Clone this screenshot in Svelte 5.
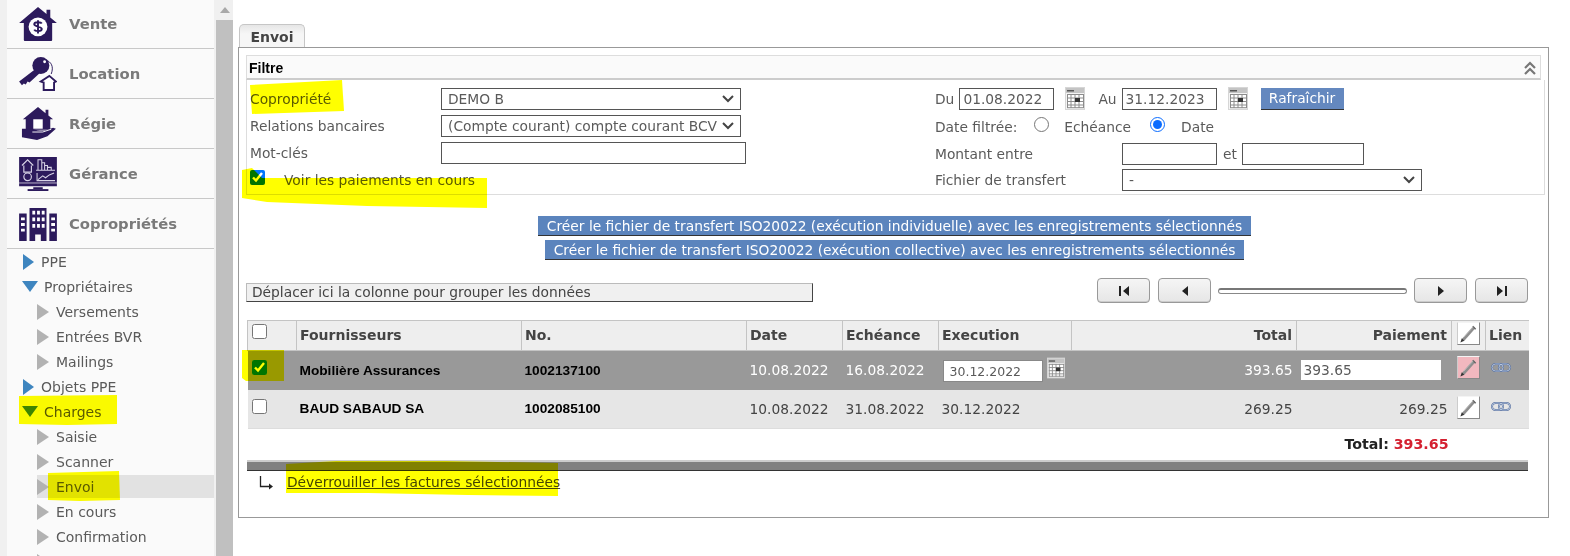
<script>
  const big = [
    { id: 'vente', label: 'Vente' },
    { id: 'location', label: 'Location' },
    { id: 'regie', label: 'Régie' },
    { id: 'gerance', label: 'Gérance' },
    { id: 'copro', label: 'Copropriétés' }
  ];
  const tree = [
    { t: 'PPE', k: 'r' },
    { t: 'Propriétaires', k: 'd' },
    { t: 'Versements', k: 's' },
    { t: 'Entrées BVR', k: 's' },
    { t: 'Mailings', k: 's' },
    { t: 'Objets PPE', k: 'r' },
    { t: 'Charges', k: 'd' },
    { t: 'Saisie', k: 's' },
    { t: 'Scanner', k: 's' },
    { t: 'Envoi', k: 's', on: true },
    { t: 'En cours', k: 's' },
    { t: 'Confirmation', k: 's' },
    { t: '', k: 's' }
  ];
</script>

{#snippet cal(cls = '')}
  <svg class="cal {cls}" viewBox="0 0 20 23" aria-hidden="true">
    <rect x="0.500" y="0.500" width="19" height="22" fill="#f4f4f4" stroke="#d6d6d6" />
    <rect x="1" y="1" width="18" height="5" fill="#c4c4c4" />
    <rect x="2" y="3" width="7" height="1.500" fill="#555" />
    <rect x="2" y="7" width="17" height="14" fill="#fff" />
    <path d="M2 7.500h17M2 11h17M2 14.500h17M2 18h17M2 20.700h17M2.500 7v14M6 7v14M10 7v14M14 7v14M18.500 7v14" stroke="#8c8c8c" stroke-width="1" />
    <rect x="10" y="11" width="5" height="4" fill="#333" />
  </svg>
{/snippet}

{#snippet pen(cls = '')}
  <span class="pen {cls}">
    <svg viewBox="0 0 22 22" aria-hidden="true">
      <path d="M5 18L17 4.500" stroke="#8e8e8e" stroke-width="3.200" />
      <path d="M15.500 3.500L18.500 6.500" stroke="#666" stroke-width="1.500" />
      <path d="M6 15L16 4" stroke="#c4c4c4" stroke-width="0.800" />
      <path d="M2.500 20.500l1.500-4.500 2.500 2.500z" fill="#333" />
    </svg>
  </span>
{/snippet}

{#snippet link()}
  <svg class="link" viewBox="0 0 20 9" aria-hidden="true">
    <rect x="1" y="1" width="11" height="7" rx="3.500" fill="none" stroke="#5a72a0" stroke-width="2" />
    <rect x="8" y="1" width="11" height="7" rx="3.500" fill="none" stroke="#5a72a0" stroke-width="2" />
    <rect x="1" y="1" width="11" height="7" rx="3.500" fill="none" stroke="#c3d0e6" stroke-width="0.800" />
    <rect x="8" y="1" width="11" height="7" rx="3.500" fill="none" stroke="#c3d0e6" stroke-width="0.800" />
  </svg>
{/snippet}

<div class="page">
  <aside class="side">
    <nav class="menu">
      {#each big as b}
        <div class="bigrow">
          <svg class="bigicon" viewBox="0 0 40 36" aria-hidden="true">
            {#if b.id === 'vente'}
              <path fill="#2c1a5c" d="M20 0L0 17h5v18q0 1 1 1h28q1 0 1-1V17h5L33 11V3h-4v4.500z" />
              <circle cx="20" cy="21" r="10" fill="#fff" />
              <path d="M24 17.500c-1-2-8-2-8 .8s8 2 8 5-7 2.800-8 .7M20 14v14" fill="none" stroke="#2c1a5c" stroke-width="2" />
            {:else if b.id === 'location'}
              <circle cx="23" cy="9" r="9" fill="#2c1a5c" />
              <circle cx="27" cy="5" r="1.500" fill="#fff" />
              <path d="M17 13L0 26l3 4 2-2 2 1 2-3 2 1 11-10z" fill="#2c1a5c" />
              <path d="M28 3c6 2 9 7 6 15" fill="none" stroke="#2c1a5c" stroke-width="1" />
              <path d="M32 20l7 6-2 1v8H26v-8l-3-1z" fill="#fff" stroke="#2c1a5c" stroke-width="2" />
            {:else if b.id === 'regie'}
              <path fill="#2c1a5c" d="M20 0L4 13h3v11h26V13h3L31 9V3h-3v3.500z" />
              <rect x="15" y="13" width="10" height="10" fill="#fff" />
              <path fill="#2c1a5c" d="M3 23h9c4 0 6 2 10 2h5l9-3 3 1-9 8-11 4-16-3z" />
              <path d="M14 26.500h11l9-3" fill="none" stroke="#fff" stroke-width="1" />
            {:else if b.id === 'gerance'}
              <path fill="#2c1a5c" d="M0 0h40v31H0z" />
              <rect x="15" y="32" width="10" height="2" fill="#2c1a5c" />
              <rect x="9" y="34" width="22" height="2" fill="#2c1a5c" />
              <rect x="0" y="27" width="40" height="1" fill="#fff" opacity=".7" />
              <path d="M3 9l6-6 6 6M5 9v7h8V9" fill="none" stroke="#d8d4e6" stroke-width="1.200" />
              <circle cx="9" cy="21" r="4" fill="none" stroke="#d8d4e6" stroke-width="1.200" />
              <path d="M20 14V3h4v11M24 14V6h3v8M27 14v-5h3v5M30 14v-3h4v3M18 14h20" fill="none" stroke="#d8d4e6" stroke-width="1.100" />
              <path d="M20 24l5-4 3 2 4-3 5-2M19 17v8h19" fill="none" stroke="#d8d4e6" stroke-width="1.100" />
            {:else}
              <path fill="#2c1a5c" d="M0 7h8v29H0zM11 1h18v35h-6v-7h-6v7h-6zM32 7h8v29h-8z" />
              <path fill="#fff" d="M14 4h3v4h-3zM19 4h3v4h-3zM24 4h3v4h-3zM14 11h3v4h-3zM19 11h3v4h-3zM24 11h3v4h-3zM14 18h3v4h-3zM19 18h3v4h-3zM24 18h3v4h-3zM2 11h4v3H2zM2 17h4v3H2zM2 23h4v3H2zM34 11h4v3h-4zM34 17h4v3h-4zM34 23h4v3h-4z" />
            {/if}
          </svg>
          <span class="biglabel">{b.label}</span>
        </div>
      {/each}
      <ul class="tree">
        {#each tree as n}
          <li class="node {n.k}" class:on={n.on}>
            <span class="tri"></span><span>{n.t}</span>
          </li>
        {/each}
      </ul>
    </nav>
    <div class="scroll"><span class="up"></span><span class="thumb"></span></div>
  </aside>

  <main class="main">
    <div class="tab">Envoi</div>
    <section class="panel">
      <header class="fhead"><b>Filtre</b>
        <svg class="collapse" viewBox="0 0 14 14" aria-hidden="true">
          <path d="M2 7l5-5 5 5M2 13l5-5 5 5" fill="none" stroke="#777" stroke-width="2.200" />
        </svg>
      </header>
      <div class="fbody">
        <div class="fleft">
          <span class="lab">Copropriété</span>
          <select class="s1"><option>DEMO B</option></select>
          <span class="lab">Relations bancaires</span>
          <select class="s1"><option>(Compte courant) compte courant BCV</option></select>
          <span class="lab">Mot-clés</span>
          <input class="i1" />
          <label class="seeing">
            <input type="checkbox" class="cb" checked />
            <span>Voir les paiements en cours</span>
          </label>
        </div>
        <div class="fright">
          <div class="frow first">
            <span>Du</span><input class="date" value="01.08.2022" />{@render cal('hcal')}
            <span class="au">Au</span><input class="date" value="31.12.2023" />{@render cal('hcal')}
            <button class="refresh">Rafraîchir</button>
          </div>
          <div class="frow radios">
            <span>Date filtrée:</span><input type="radio" name="d" class="rd" /><span>Echéance</span>
            <input type="radio" name="d" class="rd two" checked /><span>Date</span>
          </div>
          <div class="frow">
            <span class="fl">Montant entre</span><input class="date" /><span class="et">et</span><input class="date wide" />
          </div>
          <div class="frow">
            <span class="fl">Fichier de transfert</span><select class="s2"><option>-</option></select>
          </div>
        </div>
      </div>

      <div class="actions">
        <button class="act">Créer le fichier de transfert ISO20022 (exécution individuelle) avec les enregistrements sélectionnés</button>
        <button class="act">Créer le fichier de transfert ISO20022 (exécution collective) avec les enregistrements sélectionnés</button>
      </div>

      <div class="toolbar">
        <div class="group">Déplacer ici la colonne pour grouper les données</div>
        <div class="pager">
          <button class="pg" aria-label="first"><svg viewBox="0 0 12 12"><path d="M1 1h2v10H1zM11 1v10L5 6z" fill="#222" /></svg></button>
          <button class="pg" aria-label="prev"><svg viewBox="0 0 12 12"><path d="M9 1v10L3 6z" fill="#222" /></svg></button>
          <span class="track"></span>
          <button class="pg" aria-label="next"><svg viewBox="0 0 12 12"><path d="M3 1v10l6-5z" fill="#222" /></svg></button>
          <button class="pg" aria-label="last"><svg viewBox="0 0 12 12"><path d="M1 1v10l6-5zM9 1h2v10H9z" fill="#222" /></svg></button>
        </div>
      </div>

      <table class="grid">
        <colgroup>
          <col class="c1" /><col class="c2" /><col class="c3" /><col class="c4" /><col class="c5" /><col class="c6" /><col class="c7" /><col class="c8" /><col class="c9" /><col class="c10" />
        </colgroup>
        <thead>
          <tr>
            <th class="chk"><input type="checkbox" class="cb" /></th>
            <th>Fournisseurs</th><th>No.</th><th>Date</th><th>Echéance</th><th>Execution</th>
            <th class="r">Total</th><th class="r">Paiement</th>
            <th class="ic">{@render pen()}</th><th>Lien</th>
          </tr>
        </thead>
        <tbody>
          <tr class="sel">
            <td class="chk"><input type="checkbox" class="cb" checked /></td>
            <td class="b">Mobilière Assurances</td><td class="b">1002137100</td>
            <td>10.08.2022</td><td>16.08.2022</td>
            <td class="exec"><input class="ex" value="30.12.2022" />{@render cal('rcal')}</td>
            <td class="r">393.65</td>
            <td class="pay"><input class="py" value="393.65" /></td>
            <td class="ic">{@render pen('pink')}</td><td class="lk">{@render link()}</td>
          </tr>
          <tr class="odd">
            <td class="chk"><input type="checkbox" class="cb" /></td>
            <td class="b">BAUD SABAUD SA</td><td class="b">1002085100</td>
            <td>10.08.2022</td><td>31.08.2022</td><td>30.12.2022</td>
            <td class="r">269.25</td><td class="r">269.25</td>
            <td class="ic">{@render pen()}</td><td class="lk">{@render link()}</td>
          </tr>
          <tr class="sum">
            <td colspan="8" class="r"><b>Total: <em>393.65</em></b></td><td colspan="2"></td>
          </tr>
        </tbody>
      </table>
      <div class="bar"></div>
      <div class="unlock">
        <svg class="corner" viewBox="0 0 16 16" aria-hidden="true"><path d="M1.500 1v10.500H10" fill="none" stroke="#222" stroke-width="1.300" /><path d="M10 8.500l4 3-4 3z" fill="#222" /></svg>
        <a href="#u">Déverrouiller les factures sélectionnées</a>
      </div>
    </section>
  </main>

  <svg class="marks" viewBox="0 0 1570 556" aria-hidden="true">
    <path d="M250 85l92-5 2 31-92 3z" />
    <path d="M242 170l10-2 10 10 225 0v30l-120-2-100-4-25-4z" />
    <path d="M19 396l98-1v29l-50 1-48-1z" />
    <path d="M48 473l71-2 1 29-40 1-32-1z" />
    <path d="M242 350l42 0v31h-38l-4-3z" />
    <path d="M286 464l50-3 110 0 112 2v33l-90-1-100-2-82 0z" />
  </svg>
</div>

<style>
  :global(body) { margin: 0; background: #fff; }
  .page {
    position: relative; display: flex; width: 1570px; height: 556px; overflow: hidden;
    font-family: "DejaVu Sans", Verdana, sans-serif; font-size: 13.8px; color: #5a5a5a;
  }
  .side { display: flex; flex: 0 0 233px; height: 556px; background: #f0f0f0; padding-left: 7px; box-sizing: border-box; }
  .menu { width: 207px; background: #fafafa; overflow: hidden; }
  .bigrow { display: flex; align-items: center; height: 49px; border-bottom: 1px solid #c8c8c8; padding-left: 12px; }
  .bigrow:first-child { height: 47px; padding-bottom: 1px; }
  .bigicon { width: 38px; height: 34px; flex: none; }
  .biglabel { margin-left: 12px; font-weight: 700; font-size: 14.800px; color: #7a7a7a; }
  .tree { list-style: none; margin: 0; padding: 0; }
  .node { display: flex; align-items: center; height: 25px; white-space: nowrap; color: #5a5a5a; font-size: 14px; }
  .tri { flex: none; width: 0; height: 0; }
  .node.r { padding-left: 16px; }
  .node.r .tri { border-left: 11px solid #3e85bf; border-top: 8px solid transparent; border-bottom: 8px solid transparent; margin-right: 7px; }
  .node.d { padding-left: 15px; }
  .node.d .tri { border-top: 11px solid #3e85bf; border-left: 8px solid transparent; border-right: 8px solid transparent; margin-right: 6px; }
  .node.s { padding-left: 30px; }
  .node.s .tri { border-left: 12px solid #b2b2b2; border-top: 8px solid transparent; border-bottom: 8px solid transparent; margin-right: 7px; }
  .node.on { background: linear-gradient(#0000 1px, #e2e2e2 1px, #e2e2e2 24px, #0000 24px); background-position: 30px 0; background-repeat: no-repeat; }
  .scroll { flex: 0 0 17px; margin-left: 2px; background: #f0f0f0; display: flex; flex-direction: column; align-items: center; }
  .up { margin-top: 7px; border-bottom: 6px solid #a8a8a8; border-left: 5px solid transparent; border-right: 5px solid transparent; }
  .thumb { width: 17px; flex: 1; margin-top: 7px; background: #c0c0c0; }

  .main { flex: 1; padding: 24px 21px 0 5px; min-width: 0; }
  .tab {
    width: 66px; height: 23px; box-sizing: border-box; margin-left: 1px; border: 1px solid #c6c6c6; border-bottom: 0; border-radius: 5px 5px 0 0;
    background: linear-gradient(#e6e6e6, #f6f6f6 40%); font-weight: 700; color: #444; text-align: center; line-height: 24px; font-size: 14px;
  }
  .panel { border: 1px solid #999; height: 462px; padding: 7px 3px 0 7px; background: #fff; }
  .fhead { height: 25px; box-sizing: border-box; border: 1px solid #ddd; border-bottom: 2px solid #ccc; display: flex; align-items: center; justify-content: space-between; padding: 1px 3px 0 2px; background: #fafafa; margin-right: 4px; color: #000; font-family: "Liberation Sans", Arial, sans-serif; font-size: 14px; }
  .collapse { width: 14px; height: 14px; }
  .fbody { display: flex; border: 1px solid #ddd; border-top: 0; height: 115px; box-sizing: border-box; }
  .fleft { display: grid; grid-template-columns: 191px auto; grid-auto-rows: 27px; align-items: center; width: 688px; padding-left: 3px; box-sizing: border-box; align-content: start; padding-top: 5px; }
  .fright { display: flex; flex-direction: column; padding-top: 6px; }
  select, input:not([type]) { font: inherit; color: #5a5a5a; box-sizing: border-box; background-color: #fff; }
  select {
    appearance: none; border-radius: 0; padding: 0 22px 0 6px;
    background-image: url("data:image/svg+xml,%3Csvg xmlns='http://www.w3.org/2000/svg' width='12' height='8'%3E%3Cpath d='M1 1l5 5 5-5' fill='none' stroke='%23444' stroke-width='2'/%3E%3C/svg%3E");
    background-repeat: no-repeat; background-position: right 6px center;
  }
  .s1 { width: 300px; height: 22px; border: 1px solid #555; }
  .s2 { width: 300px; height: 22px; border: 1px solid #555; }
  .i1 { width: 305px; height: 22px; border: 1px solid #555; }
  .seeing { grid-column: 1 / span 2; display: flex; align-items: center; }
  .seeing span { margin-left: 19px; }
  .seeing .cb { margin-bottom: 5px; }
  .cb { width: 15px; height: 15px; margin: 0; accent-color: #0075ff; }
  .frow { display: flex; align-items: center; height: 26px; }
  .frow.first { height: 27px; margin-top: -1px; }
  .frow.radios { height: 29px; }
  .fl { width: 187px; }
  .date { width: 95px; height: 22px; border: 1px solid #555; padding: 0 3px; margin-left: 5px; }
  .frow .fl + .date { margin-left: 0; }
  .wide { width: 122px; }
  .et { margin: 0 0 0 6px; }
  .au { margin-left: 13px; }
  .cal { display: block; flex: none; }
  .hcal { width: 20px; height: 23px; margin-left: 11px; }
  .refresh { margin-left: 13px; height: 22px; width: 83px; padding: 0; border: 0; border-bottom: 1px solid #333; background: #6488bf; color: #fff; font: inherit; }
  .radios .rd { width: 15px; height: 15px; margin: -5px 15px 0 17px; accent-color: #0b6cff; }
  .radios .rd.two { margin: -5px 16px 0 19px; }
  .actions { display: flex; flex-direction: column; align-items: center; gap: 4px; margin: 21px 2px 0 0; }
  .act { height: 20px; padding: 0 9px; border: 0; border-bottom: 1px solid #333; background: #5b84bd; color: #fff; font: inherit; white-space: nowrap; }
  .toolbar { display: flex; justify-content: space-between; align-items: center; margin-top: 18px; height: 26px; padding-right: 17px; }
  .group { width: 567px; height: 19px; box-sizing: border-box; border: 1px solid #bbb; border-bottom: 1px solid #444; border-right: 1px solid #444; background: #f0f0f0; color: #444; padding-left: 5px; line-height: 17px; white-space: nowrap; margin-top: 2px; }
  .pager { display: flex; align-items: center; gap: 8px; margin-top: -1px; }
  .pg { width: 53px; height: 25px; padding: 0; border: 1px solid #999; border-radius: 4px; background: linear-gradient(#f5f5f5, #e6e6e6); display: flex; align-items: center; justify-content: center; box-shadow: inset 0 -1px 0 #ccc; }
  .pg svg { width: 12px; height: 12px; }
  .track { width: 187px; height: 3px; border: 1px solid #888; border-top: 2px solid #777; border-radius: 3px; background: #fff; margin: 0 -1px; }
  .grid { table-layout: fixed; border-collapse: collapse; width: 1281px; margin: 16px 0 0 1px; color: #444; }
  .c1 { width: 49px; } .c2 { width: 225px; } .c3 { width: 225px; } .c4 { width: 96px; } .c5 { width: 96px; } .c6 { width: 133px; } .c7 { width: 225px; } .c8 { width: 155px; } .c9 { width: 34px; } .c10 { width: 43px; }
  th { height: 30px; box-sizing: border-box; background: #eee; border: 1px solid #c4c4c4; border-width: 1px 1px 1px 0; text-align: left; padding: 0 3px 2px; font-size: 14px; color: #444; white-space: nowrap; }
  th:last-child { border-right: 0; }
  th.chk { border-left: 1px solid #c4c4c4; padding-left: 4px; vertical-align: top; padding-top: 3px; }
  th.r, td.r { text-align: right; }
  th.r { padding-right: 4px; }
  th.ic, td.ic { padding: 0 0 0 5px; vertical-align: top; }
  td { padding: 0 4px 0 3px; white-space: nowrap; vertical-align: middle; }
  .sel td { height: 39px; box-sizing: border-box; background: #999; color: #fff; }
  .odd td { height: 39px; box-sizing: border-box; background: #e6e6e6; border-bottom: 1px solid #ddd; color: #444; }
  tr td.b { font-weight: 700; color: #000; font-family: "Liberation Sans", Arial, sans-serif; font-size: 13.700px; }
  td.chk { vertical-align: top; padding: 9px 0 0 4px; }
  td.exec { vertical-align: top; padding: 9px 0 0 4px; }
  td input.ex { width: 100px; height: 22px; border: 1px solid #888; padding: 0 3px 0 6px; font-size: 12.500px; display: inline-block; vertical-align: top; }
  .rcal { display: inline-block; width: 18px; height: 24px; margin: -4px 0 0 4px; vertical-align: top; }
  td.pay { padding: 0 0 0 4px; }
  .py { width: 140px; height: 20px; border: 0 !important; padding: 0 3px; vertical-align: middle; }
  .pen { display: flex; width: 21px; height: 21px; border: 1px solid; border-color: #f4f4f4 #888 #888 #ccc; background: #fff; align-items: center; justify-content: center; }
  th .pen { margin-top: 1px; }
  td .pen { margin-top: 5px; }
  .odd td .pen { margin-top: 6px; }
  .pen.pink { background: #f2b8bf; }
  .pen svg { width: 21px; height: 21px; flex: none; }
  .lk { vertical-align: top; padding: 12px 0 0 5px; }
  .link { width: 20px; height: 9px; display: block; }
  .sum td { height: 31px; box-sizing: border-box; }
  .sum td.r { padding-right: 3px; color: #222; font-size: 14.200px; }
  .sum em { font-style: normal; color: #d42030; }
  .bar { width: 1281px; height: 11px; box-sizing: border-box; margin-left: 1px; background: #808080; border-top: 2px solid #ccc; border-bottom: 1px solid #333; }
  .unlock { display: flex; align-items: center; margin: 0 0 0 13px; height: 20px; padding-top: 1px; }
  .corner { width: 16px; height: 16px; margin: 2px 12px 0 0; }
  .unlock a { color: #444; text-decoration: underline; }
  .marks { position: absolute; inset: 0; width: 1570px; height: 556px; pointer-events: none; mix-blend-mode: multiply; }
  .marks path { fill: #ffff00; }
</style>
